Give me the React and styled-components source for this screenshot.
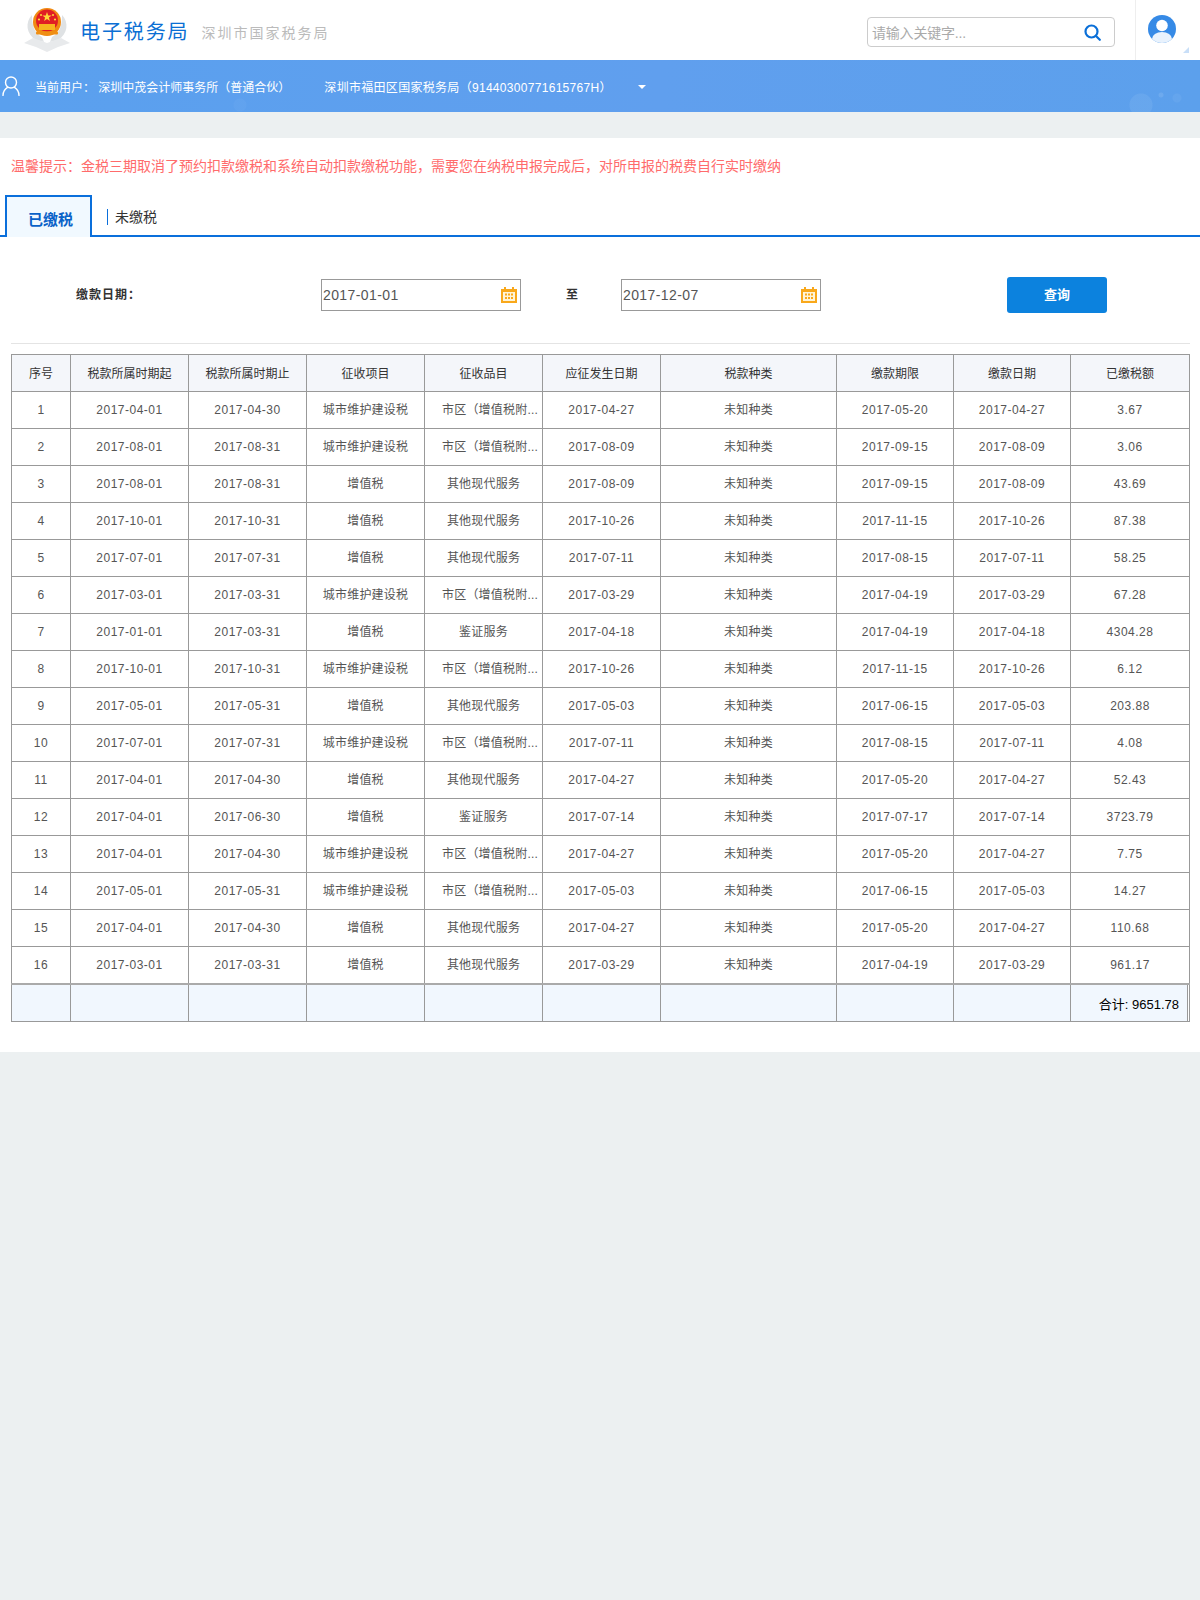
import styled, { createGlobalStyle } from "styled-components";

const GlobalStyle = createGlobalStyle`
  html, body {
    margin: 0;
    padding: 0;
    background: #ecf0f1;
  }
  body {
    min-height: 1600px;
    font-family: "Liberation Sans", "Noto Sans CJK SC", sans-serif;
    font-size: 12px;
    color: #333;
  }
`;

const Header = styled.header`
  height: 60px;
  background: #fff;
  display: flex;
  align-items: stretch;
  justify-content: space-between;
`;

const Brand = styled.div`
  display: flex;
  align-items: center;
  padding-left: 24px;
`;

const BrandTitle = styled.span`
  margin-left: 10px;
  font-size: 20px;
  letter-spacing: 1.9px;
  color: #0b6fd4;
`;

const BrandSub = styled.span`
  margin-left: 12px;
  margin-top: 3px;
  font-size: 14px;
  letter-spacing: 2px;
  color: #bbb;
`;

const HeaderRight = styled.div`
  display: flex;
  align-items: stretch;
`;

const SearchBox = styled.div`
  align-self: center;
  width: 248px;
  height: 30px;
  box-sizing: border-box;
  margin: 4px 20px 0 0;
  padding: 0 13px 0 4px;
  border: 1px solid #ccc;
  border-radius: 4px;
  display: flex;
  align-items: center;
  justify-content: space-between;
  color: #aaa;
  font-size: 14px;
  letter-spacing: -0.2px;
`;

const AvatarCell = styled.div`
  position: relative;
  width: 65px;
  box-sizing: border-box;
  border-left: 1px solid #eee;
  padding: 15px 0 0 12px;
`;

const Corner = styled.span`
  position: absolute;
  right: 11px;
  bottom: 7px;
  width: 0;
  height: 0;
  border-left: 6px solid transparent;
  border-bottom: 6px solid #c9dff8;
`;

const UserBar = styled.div`
  height: 52px;
  box-sizing: border-box;
  padding: 0 0 0 2px;
  display: flex;
  align-items: center;
  color: #fff;
  font-size: 12px;
  background:
    radial-gradient(circle at 1141px 45px, rgba(255, 255, 255, 0.07) 11px, transparent 12px),
    radial-gradient(circle at 1161px 35px, rgba(255, 255, 255, 0.1) 2px, transparent 3px),
    radial-gradient(circle at 1177px 38px, rgba(255, 255, 255, 0.05) 4px, transparent 5px),
    radial-gradient(circle at 240px 45px, rgba(255, 255, 255, 0.03) 6px, transparent 7px),
    linear-gradient(90deg, #5aa0ee 0%, #609fee 55%, #5ca0ec 100%);
`;

const UserText = styled.span`
  margin-left: ${(p) => p.$gap}px;
  letter-spacing: ${(p) => p.$spacing}px;
  white-space: pre;
`;

const Caret = styled.span`
  margin-left: 26px;
  margin-top: 2px;
  width: 0;
  height: 0;
  border-left: 4px solid transparent;
  border-right: 4px solid transparent;
  border-top: 4px solid #fff;
`;

const Panel = styled.main`
  margin-top: 26px;
  background: #fff;
  padding-bottom: 30px;
`;

const Tip = styled.div`
  padding: 18px 0 0 11px;
  height: 20px;
  line-height: 20px;
  color: #ff6b6b;
  font-size: 14px;
`;

const TabBar = styled.div`
  margin-top: 19px;
  height: 42px;
  box-sizing: border-box;
  padding-left: 5px;
  border-bottom: 2px solid #0a6fdb;
  display: flex;
`;

const ActiveTab = styled.div`
  width: 87px;
  box-sizing: border-box;
  margin-bottom: -2px;
  padding: 11px 0 0 21px;
  border: 2px solid #0a6fdb;
  border-bottom: 0;
  background: #f1f9ff;
  color: #0a62c8;
  font-size: 15px;
  font-weight: 700;
`;

const Tab = styled.div`
  margin: 14px 0 0 15px;
  height: 16px;
  padding-left: 7px;
  border-left: 1px solid #0a6fdb;
  line-height: 16px;
  font-size: 14px;
  color: #333;
`;

const Content = styled.div`
  margin: 40px 10px 0 11px;
`;

const FilterRow = styled.form`
  display: grid;
  grid-template-columns: 245px 200px 45px 55px 200px 186px 100px;
  align-items: center;
  height: 36px;
  padding: 0 0 30px 65px;
  border-bottom: 1px solid #e4e4e4;
`;

const FilterLabel = styled.label`
  padding-bottom: 3px;
  font-weight: 700;
  letter-spacing: 1px;
  color: #333;
`;

const DateField = styled.div`
  height: 32px;
  box-sizing: border-box;
  border: 1px solid #999;
  padding: 0 3px 1px 1px;
  display: flex;
  align-items: center;
  justify-content: space-between;
  font-size: 14px;
  letter-spacing: 0.4px;
  color: #555;
`;

const To = styled.span`
  grid-column: 4;
  padding-bottom: 3px;
  font-weight: 700;
`;

const QueryButton = styled.button`
  grid-column: 7;
  height: 36px;
  padding: 0 0 4px;
  border: 0;
  border-radius: 3px;
  background: #0c82de;
  color: #fff;
  font: 700 13px "Liberation Sans", "Noto Sans CJK SC", sans-serif;
`;

const Table = styled.table`
  margin-top: 10px;
  width: 1178px;
  table-layout: fixed;
  border-collapse: collapse;
  background: #fff;
`;

const Row = styled.tr`
  height: 37px;
`;

const Th = styled.th`
  padding: 0 0 2px;
  border: 1px solid #999;
  background: #f4f6fa;
  font-weight: 400;
  color: #333;
`;

const Td = styled.td`
  padding: 0 0 ${(p) => (p.$cjk ? 3 : 0)}px ${(p) => p.$indent || 0}px;
  border: 1px solid #999;
  text-align: center;
  letter-spacing: ${(p) => (p.$cjk ? 0.2 : 0.5)}px;
  color: #555;
  white-space: nowrap;
  overflow: hidden;
`;

const TotalRow = styled.tr`
  height: 38px;
  border-top: 2px solid #aaa;
`;

const TotalCell = styled.td`
  padding: 0;
  border: 1px solid #999;
  background: #f1f7fe;
`;

const TotalValue = styled(TotalCell)`
  text-align: right;
  padding: 2px 10px 0 0;
  font-size: 13px;
  color: #000;
  box-shadow: inset -1px 0 0 #fff, inset -2px 0 0 #999;
`;

const columns = [59, 118, 118, 118, 118, 118, 176, 117, 117, 119];
const headers = [
  "序号", "税款所属时期起", "税款所属时期止", "征收项目", "征收品目",
  "应征发生日期", "税款种类", "缴款期限", "缴款日期", "已缴税额",
];

const CITY = "城市维护建设税";
const VAT = "增值税";
const URBAN = "市区（增值税附...";
const OTHER = "其他现代服务";
const CERT = "鉴证服务";

const rows = [
  ["2017-04-01", "2017-04-30", CITY, URBAN, "2017-04-27", "2017-05-20", "3.67"],
  ["2017-08-01", "2017-08-31", CITY, URBAN, "2017-08-09", "2017-09-15", "3.06"],
  ["2017-08-01", "2017-08-31", VAT, OTHER, "2017-08-09", "2017-09-15", "43.69"],
  ["2017-10-01", "2017-10-31", VAT, OTHER, "2017-10-26", "2017-11-15", "87.38"],
  ["2017-07-01", "2017-07-31", VAT, OTHER, "2017-07-11", "2017-08-15", "58.25"],
  ["2017-03-01", "2017-03-31", CITY, URBAN, "2017-03-29", "2017-04-19", "67.28"],
  ["2017-01-01", "2017-03-31", VAT, CERT, "2017-04-18", "2017-04-19", "4304.28"],
  ["2017-10-01", "2017-10-31", CITY, URBAN, "2017-10-26", "2017-11-15", "6.12"],
  ["2017-05-01", "2017-05-31", VAT, OTHER, "2017-05-03", "2017-06-15", "203.88"],
  ["2017-07-01", "2017-07-31", CITY, URBAN, "2017-07-11", "2017-08-15", "4.08"],
  ["2017-04-01", "2017-04-30", VAT, OTHER, "2017-04-27", "2017-05-20", "52.43"],
  ["2017-04-01", "2017-06-30", VAT, CERT, "2017-07-14", "2017-07-17", "3723.79"],
  ["2017-04-01", "2017-04-30", CITY, URBAN, "2017-04-27", "2017-05-20", "7.75"],
  ["2017-05-01", "2017-05-31", CITY, URBAN, "2017-05-03", "2017-06-15", "14.27"],
  ["2017-04-01", "2017-04-30", VAT, OTHER, "2017-04-27", "2017-05-20", "110.68"],
  ["2017-03-01", "2017-03-31", VAT, OTHER, "2017-03-29", "2017-04-19", "961.17"],
];

function Emblem() {
  return (
    <svg width="46" height="46" viewBox="0 0 46 46">
      <path d="M8 8C1 15 2 27 12 33l8 2-2-5C10 26 8 18 8 8z" fill="#dfe2e4" />
      <path d="M38 8c7 7 6 19-4 25l-8 2 2-5c8-4 10-12 10-22z" fill="#dfe2e4" />
      <path d="M0 36l9-5 14 5 14-5 9 5-12 4-11 5-11-5z" fill="#e8eaec" />
      <circle cx="23" cy="15" r="14" fill="#f08a12" />
      <circle cx="23" cy="13.5" r="11" fill="#e01e24" />
      <path d="M23 5l1.2 3.4 3.5.1-2.8 2.1 1 3.4-2.9-2-2.9 2 1-3.4-2.8-2.1 3.5-.1z" fill="#ffd83a" />
      <circle cx="15" cy="12.5" r="1.1" fill="#ffd83a" />
      <circle cx="31" cy="12.5" r="1.1" fill="#ffd83a" />
      <circle cx="17" cy="8" r="1" fill="#ffd83a" />
      <circle cx="29" cy="8" r="1" fill="#ffd83a" />
      <rect x="15" y="17" width="16" height="6" fill="#f6b51e" />
      <rect x="12" y="24.5" width="22" height="3" rx="1" fill="#ef8f14" />
    </svg>
  );
}

function SearchIcon() {
  return (
    <svg width="17" height="17" viewBox="0 0 17 17" fill="none" stroke="#0a6fd8" strokeWidth="2.2">
      <circle cx="7.5" cy="7.5" r="6" />
      <path d="M12 12L15.8 15.8" strokeLinecap="round" />
    </svg>
  );
}

function Avatar() {
  return (
    <svg width="28" height="28" viewBox="0 0 28 28">
      <defs>
        <clipPath id="avatar-clip">
          <circle cx="14" cy="14" r="14" />
        </clipPath>
      </defs>
      <circle cx="14" cy="14" r="14" fill="#368ae6" />
      <g clipPath="url(#avatar-clip)" fill="#fff">
        <circle cx="14" cy="10.5" r="5.8" />
        <ellipse cx="14" cy="24" rx="10" ry="7" fill="#e8f2fd" />
      </g>
    </svg>
  );
}

function UserIcon() {
  return (
    <svg width="18" height="20" viewBox="0 0 18 20" fill="none" stroke="#fff" strokeWidth="1.4">
      <circle cx="9" cy="6.5" r="5.5" />
      <path d="M1 19.5c0-4.5 2.5-7 4.5-8.2M17 19.5c0-4.5-2.5-7-4.5-8.2" strokeLinecap="round" />
    </svg>
  );
}

function CalendarIcon() {
  return (
    <svg width="16" height="16" viewBox="0 0 16 16">
      <path d="M0 2h3V0h2v2h6V0h2v2h3v14H0z" fill="#f9a81b" />
      <rect x="2" y="5" width="12" height="9" fill="#fff4d8" />
      <g fill="#f9a81b">
        <rect x="4" y="6.5" width="2" height="2" />
        <rect x="7" y="6.5" width="2" height="2" />
        <rect x="10" y="6.5" width="2" height="2" />
        <rect x="4" y="10" width="2" height="2" />
        <rect x="7" y="10" width="2" height="2" />
        <rect x="10" y="10" width="2" height="2" />
      </g>
    </svg>
  );
}

export default function App() {
  return (
    <>
      <GlobalStyle />
      <Header>
        <Brand>
          <Emblem />
          <BrandTitle>电子税务局</BrandTitle>
          <BrandSub>深圳市国家税务局</BrandSub>
        </Brand>
        <HeaderRight>
          <SearchBox>
            <span>请输入关键字...</span>
            <SearchIcon />
          </SearchBox>
          <AvatarCell>
            <Avatar />
            <Corner />
          </AvatarCell>
        </HeaderRight>
      </Header>
      <UserBar>
        <UserIcon />
        <UserText $gap={15} $spacing={0}>当前用户： 深圳中茂会计师事务所（普通合伙）</UserText>
        <UserText $gap={34} $spacing={0.3}>深圳市福田区国家税务局（91440300771615767H）</UserText>
        <Caret />
      </UserBar>
      <Panel>
        <Tip>温馨提示：金税三期取消了预约扣款缴税和系统自动扣款缴税功能，需要您在纳税申报完成后，对所申报的税费自行实时缴纳</Tip>
        <TabBar>
          <ActiveTab>已缴税</ActiveTab>
          <Tab>未缴税</Tab>
        </TabBar>
        <Content>
          <FilterRow>
            <FilterLabel>缴款日期：</FilterLabel>
            <DateField>
              2017-01-01
              <CalendarIcon />
            </DateField>
            <To>至</To>
            <DateField>
              2017-12-07
              <CalendarIcon />
            </DateField>
            <QueryButton type="button">查询</QueryButton>
          </FilterRow>
          <Table>
            <colgroup>
              {columns.map((width, i) => (
                <col key={i} width={width} />
              ))}
            </colgroup>
            <thead>
              <Row>
                {headers.map((title) => (
                  <Th key={title}>{title}</Th>
                ))}
              </Row>
            </thead>
            <tbody>
              {rows.map((row, i) => (
                <Row key={i}>
                  <Td>{i + 1}</Td>
                  <Td>{row[0]}</Td>
                  <Td>{row[1]}</Td>
                  <Td $cjk>{row[2]}</Td>
                  <Td $cjk $indent={row[3] === URBAN ? 13 : 0}>{row[3]}</Td>
                  <Td>{row[4]}</Td>
                  <Td $cjk>未知种类</Td>
                  <Td>{row[5]}</Td>
                  <Td>{row[4]}</Td>
                  <Td>{row[6]}</Td>
                </Row>
              ))}
              <TotalRow>
                {headers.slice(0, 9).map((title) => (
                  <TotalCell key={title} />
                ))}
                <TotalValue>合计: 9651.78</TotalValue>
              </TotalRow>
            </tbody>
          </Table>
        </Content>
      </Panel>
    </>
  );
}
